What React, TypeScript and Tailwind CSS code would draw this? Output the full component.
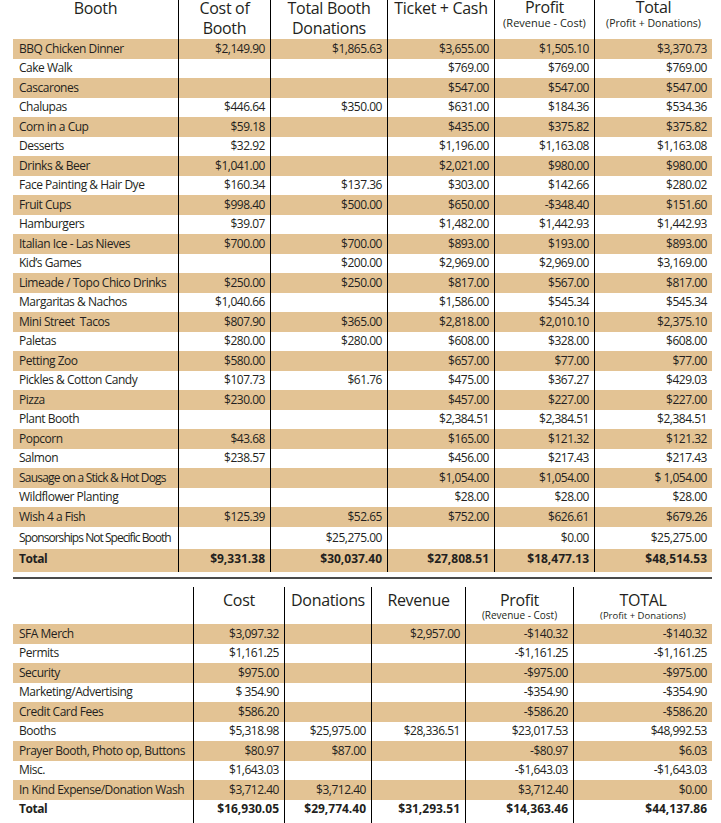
import React from "react";

const topCols = "grid grid-cols-[165px_92px_117px_107px_100px_118px]";
const botCols = "grid grid-cols-[180px_91px_87px_94px_108px_139px]";

const topRows: string[][] = [
  ["BBQ Chicken Dinner", "$2,149.90", "$1,865.63", "$3,655.00", "$1,505.10", "$3,370.73"],
  ["Cake Walk", "", "", "$769.00", "$769.00", "$769.00"],
  ["Cascarones", "", "", "$547.00", "$547.00", "$547.00"],
  ["Chalupas", "$446.64", "$350.00", "$631.00", "$184.36", "$534.36"],
  ["Corn in a Cup", "$59.18", "", "$435.00", "$375.82", "$375.82"],
  ["Desserts", "$32.92", "", "$1,196.00", "$1,163.08", "$1,163.08"],
  ["Drinks & Beer", "$1,041.00", "", "$2,021.00", "$980.00", "$980.00"],
  ["Face Painting & Hair Dye", "$160.34", "$137.36", "$303.00", "$142.66", "$280.02"],
  ["Fruit Cups", "$998.40", "$500.00", "$650.00", "-$348.40", "$151.60"],
  ["Hamburgers", "$39.07", "", "$1,482.00", "$1,442.93", "$1,442.93"],
  ["Italian Ice - Las Nieves", "$700.00", "$700.00", "$893.00", "$193.00", "$893.00"],
  ["Kid\u2019s Games", "", "$200.00", "$2,969.00", "$2,969.00", "$3,169.00"],
  ["Limeade / Topo Chico Drinks", "$250.00", "$250.00", "$817.00", "$567.00", "$817.00"],
  ["Margaritas & Nachos", "$1,040.66", "", "$1,586.00", "$545.34", "$545.34"],
  ["Mini Street  Tacos", "$807.90", "$365.00", "$2,818.00", "$2,010.10", "$2,375.10"],
  ["Paletas", "$280.00", "$280.00", "$608.00", "$328.00", "$608.00"],
  ["Petting Zoo", "$580.00", "", "$657.00", "$77.00", "$77.00"],
  ["Pickles & Cotton Candy", "$107.73", "$61.76", "$475.00", "$367.27", "$429.03"],
  ["Pizza", "$230.00", "", "$457.00", "$227.00", "$227.00"],
  ["Plant Booth", "", "", "$2,384.51", "$2,384.51", "$2,384.51"],
  ["Popcorn", "$43.68", "", "$165.00", "$121.32", "$121.32"],
  ["Salmon", "$238.57", "", "$456.00", "$217.43", "$217.43"],
  ["Sausage on a Stick & Hot Dogs", "", "", "$1,054.00", "$1,054.00", "$ 1,054.00"],
  ["Wildflower Planting", "", "", "$28.00", "$28.00", "$28.00"],
  ["Wish 4 a Fish", "$125.39", "$52.65", "$752.00", "$626.61", "$679.26"],
];

const botRows: string[][] = [
  ["SFA Merch", "$3,097.32", "", "$2,957.00", "-$140.32", "-$140.32"],
  ["Permits", "$1,161.25", "", "", "-$1,161.25", "-$1,161.25"],
  ["Security", "$975.00", "", "", "-$975.00", "-$975.00"],
  ["Marketing/Advertising", "$ 354.90", "", "", "-$354.90", "-$354.90"],
  ["Credit Card Fees", "$586.20", "", "", "-$586.20", "-$586.20"],
  ["Booths", "$5,318.98", "$25,975.00", "$28,336.51", "$23,017.53", "$48,992.53"],
  ["Prayer Booth, Photo op, Buttons", "$80.97", "$87.00", "", "-$80.97", "$6.03"],
  ["Misc.", "$1,643.03", "", "", "-$1,643.03", "-$1,643.03"],
  ["In Kind Expense/Donation Wash", "$3,712.40", "$3,712.40", "", "$3,712.40", "$0.00"],
];

function DataRow({
  cells,
  cols,
  tan,
  h,
  bold,
  nameCls = "tracking-[-0.04em]",
  textCls = "",
}: {
  cells: string[];
  cols: string;
  tan: boolean;
  h: string;
  bold?: boolean;
  nameCls?: string;
  textCls?: string;
}) {
  const numTrack = bold ? "tracking-[0em]" : "tracking-[-0.04em]";
  return (
    <div className={`${cols} ${h} ${tan ? "bg-[#e3c394]" : "bg-white"} ${bold ? "font-bold" : ""}`}>
      {cells.map((c, i) =>
        i === 0 ? (
          <div key={i} className={`flex items-center pl-[6px] whitespace-pre ${nameCls} ${textCls}`}>
            {c}
          </div>
        ) : (
          <div key={i} className={`flex items-center justify-end pr-[5px] border-l border-black whitespace-pre ${numTrack} ${textCls}`}>
            {c}
          </div>
        )
      )}
    </div>
  );
}

function Head({
  big,
  small,
  smallCls = "",
  line,
  offset,
}: {
  big: string[];
  small?: string;
  smallCls?: string;
  line: boolean;
  offset: string;
}) {
  return (
    <div className={`flex flex-col items-center ${line ? "border-l border-black" : ""}`}>
      <div className={`flex flex-col items-center ${offset}`}>
        {big.map((b, i) => (
          <span key={i} className="text-[16px] leading-[20px] whitespace-pre tracking-[-0.02em]">
            {b}
          </span>
        ))}
        {small && <span className={`leading-[12px] whitespace-pre ${smallCls}`}>{small}</span>}
      </div>
    </div>
  );
}

function BotHead({
  big,
  small,
  smallCls = "",
  line,
}: {
  big: string;
  small?: string;
  smallCls?: string;
  line: boolean;
}) {
  return (
    <div className={`flex flex-col items-center ${line ? "border-l border-black" : ""}`}>
      <span className="mt-[3px] text-[16px] leading-[20px] whitespace-pre tracking-[-0.02em]">{big}</span>
      {small && <span className={`leading-[11px] whitespace-pre ${smallCls}`}>{small}</span>}
    </div>
  );
}

export default function App() {
  return (
    <div className="w-[721px] h-[823px] overflow-hidden bg-white text-[#231f20] font-['Open_Sans','Noto_Sans',sans-serif] text-[12px]">
      <div className="ml-[13px] w-[699px]">
        {/* top header */}
        <div className={`${topCols} h-[39px]`}>
          <Head big={["Booth"]} line={false} offset="-mt-[2px]" />
          <Head big={["Cost of", "Booth"]} line offset="-mt-[2px]" />
          <Head big={["Total Booth", "Donations"]} line offset="-mt-[2px]" />
          <Head big={["Ticket + Cash"]} line offset="-mt-[2px]" />
          <Head big={["Profit"]} small="(Revenue - Cost)" smallCls="text-[11px]" line offset="-mt-[3px]" />
          <Head big={["Total"]} small="(Profit + Donations)" smallCls="text-[10.5px]" line offset="-mt-[3px]" />
        </div>
        {topRows.map((r, i) => (
          <DataRow
            key={r[0]}
            cells={r}
            cols={topCols}
            tan={i % 2 === 0}
            h="h-[19.5px]"
            nameCls={r[0].startsWith("Sausage") ? "tracking-[-0.065em]" : "tracking-[-0.04em]"}
          />
        ))}
        <DataRow
          cells={["Sponsorships Not Specific Booth", "", "$25,275.00", "", "$0.00", "$25,275.00"]}
          cols={topCols}
          tan={false}
          h="h-[22.5px]"
          nameCls="tracking-[-0.08em]"
        />
        <DataRow
          cells={["Total", "$9,331.38", "$30,037.40", "$27,808.51", "$18,477.13", "$48,514.53"]}
          cols={topCols}
          tan
          bold
          h="h-[23px]"
          textCls="pb-[4px]"
        />

        {/* separator */}
        <div className="mt-[5px] h-[2px] bg-[#4a4a4a]" />

        {/* bottom table */}
        <div className={`${botCols} h-[37px] mt-[8px]`}>
          <BotHead big="" line={false} />
          <BotHead big="Cost" line />
          <BotHead big="Donations" line />
          <BotHead big="Revenue" line />
          <BotHead big="Profit" small="(Revenue - Cost)" smallCls="text-[10px]" line />
          <BotHead big="TOTAL" small="(Profit + Donations)" smallCls="text-[9.5px]" line />
        </div>
        {botRows.map((r, i) => (
          <DataRow key={r[0]} cells={r} cols={botCols} tan={i % 2 === 0} h="h-[19.5px]" />
        ))}
        <DataRow
          cells={["Total", "$16,930.05", "$29,774.40", "$31,293.51", "$14,363.46", "$44,137.86"]}
          cols={botCols}
          tan={false}
          bold
          h="h-[19.5px]"
        />
        <DataRow cells={["", "", "", "", "", ""]} cols={botCols} tan={false} h="h-[4px]" />
      </div>
    </div>
  );
}
